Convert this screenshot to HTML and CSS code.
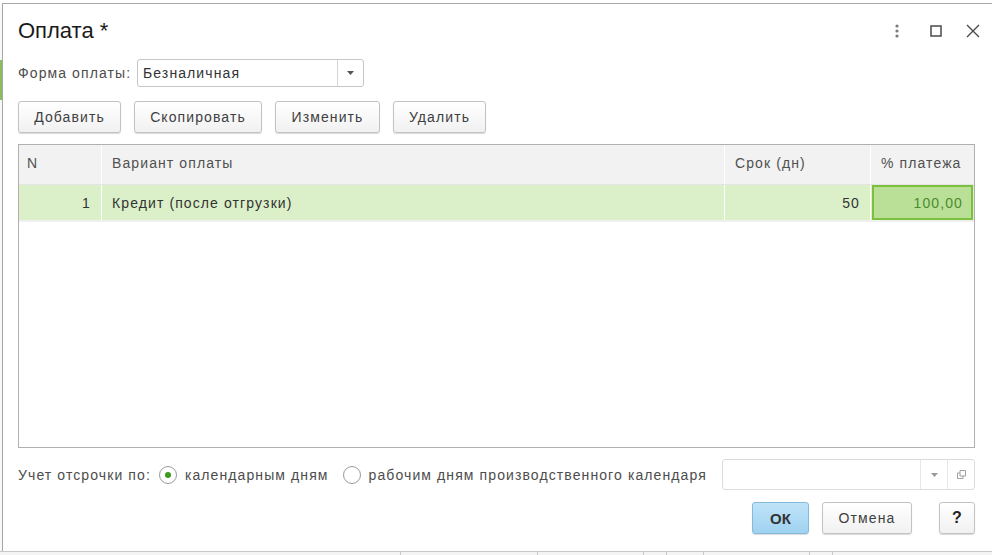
FILE: index.html
```html
<!DOCTYPE html>
<html lang="ru">
<head>
<meta charset="utf-8">
<title>Оплата</title>
<link rel="stylesheet" href="styles.css">
</head>
<body>
<div class="desk">
  <div class="dialog">
    <div class="head">
      <div class="title">Оплата *</div>
      <div class="wctl">
        <svg class="ic dots" width="14" height="16" viewBox="0 0 14 16"><circle cx="7" cy="3" r="1.6" fill="#7a7a7a"/><circle cx="7" cy="8" r="1.6" fill="#7a7a7a"/><circle cx="7" cy="13" r="1.6" fill="#7a7a7a"/></svg>
        <svg class="ic sq" width="14" height="16" viewBox="0 0 14 16"><rect x="2" y="3" width="10" height="10" fill="none" stroke="#4a4a4a" stroke-width="1.5"/></svg>
        <svg class="ic" width="16" height="16" viewBox="0 0 16 16"><path d="M2 2 L14 14 M14 2 L2 14" stroke="#4a4a4a" stroke-width="1.4" fill="none"/></svg>
      </div>
    </div>
    <div class="row form">
      <span class="lbl">Форма оплаты:</span>
      <div class="combo w227">
        <span class="val">Безналичная</span>
        <span class="dd"><svg width="7" height="4" viewBox="0 0 7 4"><path d="M0 0 H7 L3.5 4 Z" fill="#555"/></svg></span>
      </div>
    </div>
    <div class="row tools">
      <button class="btn b-add">Добавить</button>
      <button class="btn b-copy">Скопировать</button>
      <button class="btn b-edit">Изменить</button>
      <button class="btn b-del">Удалить</button>
    </div>
    <div class="grid">
      <div class="tr th">
        <div class="c c1">N</div>
        <div class="c c2">Вариант оплаты</div>
        <div class="c c3">Срок (дн)</div>
        <div class="c c4">% платежа</div>
      </div>
      <div class="tr td">
        <div class="c c1 r">1</div>
        <div class="c c2">Кредит (после отгрузки)</div>
        <div class="c c3 r">50</div>
        <div class="c c4 r sel">100,00</div>
      </div>
    </div>
    <div class="row opts">
      <span class="lbl">Учет отсрочки по:</span>
      <span class="radio on"></span>
      <span class="rtext">календарным дням</span>
      <span class="radio"></span>
      <span class="rtext">рабочим дням производственного календаря</span>
      <div class="combo cal">
        <span class="val"></span>
        <span class="dd"><svg width="7" height="4" viewBox="0 0 7 4"><path d="M0 0 H7 L3.5 4 Z" fill="#999"/></svg></span>
        <span class="dd op"><svg width="11" height="11" viewBox="0 0 11 11"><path d="M4 1.5 H9.5 V7 H4 Z M4 4 H1.5 V9.5 H7 V7" fill="none" stroke="#a0a0a0" stroke-width="1"/></svg></span>
      </div>
    </div>
    <div class="row foot">
      <button class="btn ok">ОК</button>
      <button class="btn cancel">Отмена</button>
      <button class="btn help">?</button>
    </div>
  </div>
  <div class="under">
    <span class="u1"></span><span class="u2"></span><span class="u3"></span><span class="u4"></span><span class="u5"></span><span class="u6"></span><span class="u7"></span>
  </div>
</div>
</body>
</html>
```

FILE: styles.css
```css
html, body { margin: 0; padding: 0; }
body {
  width: 992px; height: 555px; overflow: hidden;
  background: #ffffff;
  font-family: "Liberation Sans", Arial, sans-serif;
  font-size: 14px; color: #333; letter-spacing: 1.1px;
}
.desk {
  width: 992px; height: 555px; position: relative;
  background: linear-gradient(to bottom, #fff 0, #fff 60px, #8fc45b 60px, #8fc45b 100px, #fff 100px) left top / 2px 100% no-repeat, #fff;
  padding-top: 3px; box-sizing: border-box;
}
.dialog {
  margin-left: 2px;
  width: 1000px; height: 549px; box-sizing: border-box;
  border: 1px solid #a8a8a8;
  background: #fff;
  padding: 0 0 0 15px;
  box-shadow: 0 2px 3px rgba(0,0,0,0.12);
  display: flex; flex-direction: column;
}
.dialog > .row, .dialog > .grid, .dialog > .head { width: 957px; }
.head {
  height: 54px; display: flex; align-items: center; justify-content: space-between;
}
.title { font-size: 22px; color: #1a1a1a; letter-spacing: 0; }
.wctl { display: flex; align-items: center; margin-right: -6px; }
.wctl .ic { display: block; }
.wctl .dots { margin-right: 25px; }
.wctl .sq { margin-right: 22px; }
.row { display: flex; align-items: center; }
.form { height: 28px; margin-top: 1px; }
.lbl { color: #4d4d4d; white-space: nowrap; }
.form .lbl { width: 119px; }
.combo {
  height: 28px; box-sizing: border-box;
  border: 1px solid #c6c6c6; border-radius: 3px;
  display: flex; align-items: stretch; background: #fff;
}
.w227 { width: 227px; }
.combo .val { flex: 1; padding-left: 5px; display: flex; align-items: center; color: #333; }
.combo .dd {
  width: 25px; border-left: 1px solid #d6d6d6;
  display: flex; align-items: center; justify-content: center;
}
.tools { height: 32px; margin-top: 14px; gap: 13px; }
.btn {
  font-family: "Liberation Sans", Arial, sans-serif; font-size: 14px; color: #404040; letter-spacing: 1.1px;
  height: 32px; box-sizing: border-box; padding: 0;
  border: 1px solid #c2c2c2; border-radius: 3px;
  background: linear-gradient(#ffffff, #f1f1f1);
  box-shadow: 0 1px 1px rgba(0,0,0,0.15);
}
.b-add { width: 103px; }
.b-copy { width: 128px; }
.b-edit { width: 105px; }
.b-del { width: 93px; }
.grid {
  margin-top: 11px; height: 304px; box-sizing: border-box;
  border: 1px solid #b0b0b0;
}
.tr { display: flex; }
.c { box-sizing: border-box; padding: 0 10px; display: flex; align-items: center; white-space: nowrap; }
.c1 { width: 83px; padding-left: 8px; }
.c2 { width: 623px; }
.c3 { width: 146px; }
.c4 { flex: 1; }
.th { height: 39px; background: #f2f2f2; border-bottom: 1px solid #e4e4e4; }
.th .c { color: #505050; border-right: 1px solid #ffffff; padding-bottom: 4px; }
.th .c4 { border-right: 0; }
.td { height: 35px; background: #dbf0c8; border-bottom: 2px solid #f0f0f0; }
.td .c { border-right: 1px solid #fff; color: #333; }
.td .c4 { border-right: 0; }
.r { justify-content: flex-end; }
.td .c1 { padding-right: 10px; }
.td .c3 { padding-right: 10px; }
.td .sel {
  background: #b9e096; border: 2px solid #7cc13e; color: #4d8b30; padding-right: 8px;
  margin-left: 1px; margin-right: 1px;
}
.opts { margin-top: 11px; height: 31px; }
.opts .lbl { margin-right: 8px; }
.radio {
  width: 18px; height: 18px; box-sizing: border-box;
  border: 1px solid #9a9a9a; border-radius: 50%; background: #fff;
  display: flex; align-items: center; justify-content: center; flex: none;
}
.radio.on::after { content: ""; width: 6px; height: 6px; border-radius: 50%; background: #3e9a1c; }
.rtext { color: #4d4d4d; margin-left: 8px; margin-right: 14px; white-space: nowrap; }
.cal { width: 253px; height: 31px; margin-left: auto; border-color: #dcdcdc; }
.cal .dd { width: 26px; border-left: 1px solid #e6e6e6; }
.foot { margin-top: 12px; height: 32px; justify-content: flex-end; }
.ok {
  width: 57px; font-weight: bold; font-size: 15px; color: #333; letter-spacing: 0;
  background: linear-gradient(#bfe3f8, #9fd2f1); border-color: #84b9dc;
}
.cancel { width: 90px; margin-left: 13px; }
.help { width: 36px; margin-left: 27px; font-weight: bold; font-size: 16px; color: #222; letter-spacing: 0; }
.under {
  position: absolute; left: 0; right: 0; bottom: 0; height: 3px;
  border-top: 1px solid #c8c8c8; background: #f4f4f4; display: flex;
}
.under span { border-right: 1px solid #c8c8c8; }
.u1 { width: 400px; } .u2 { width: 136px; } .u3 { width: 105px; } .u4 { width: 22px; } .u5 { width: 36px; } .u6 { width: 105px; } .u7 { width: 22px; }
```
